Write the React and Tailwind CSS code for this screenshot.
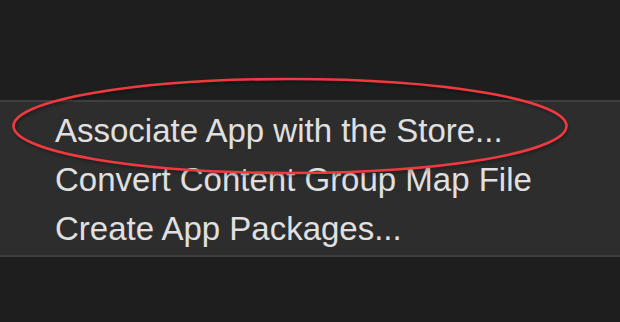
export default function App() {
  const items = [
    "Associate App with the Store...",
    "Convert Content Group Map File",
    "Create App Packages...",
  ];
  return (
    <div
      className="relative w-[620px] h-[322px] overflow-hidden bg-[#1e1e1e]"
      style={{ fontFamily: '"Liberation Sans", Arial, sans-serif' }}
    >
      <div className="mt-[100px] border-t-2 border-b-2 border-[#3f3f3f] bg-[#2d2d2d] pt-[4px] pb-[2px]">
        {items.map((t) => (
          <div
            key={t}
            className="pl-[55px] text-[33px] leading-[49px] text-[#e0e0e0] whitespace-nowrap"
          >
            {t}
          </div>
        ))}
      </div>
      <svg
        className="absolute left-0 top-0 pointer-events-none"
        width="620"
        height="322"
        viewBox="0 0 620 322"
      >
        <defs>
          <filter id="sh" x="-10%" y="-30%" width="120%" height="160%">
            <feGaussianBlur stdDeviation="1.5" />
          </filter>
        </defs>
        <ellipse
          cx="291"
          cy="128"
          rx="276"
          ry="47"
          fill="none"
          stroke="rgba(0,0,0,0.3)"
          strokeWidth="3"
          filter="url(#sh)"
        />
        <ellipse
          cx="290"
          cy="126"
          rx="276.5"
          ry="47"
          fill="none"
          stroke="#f03a40"
          strokeWidth="2.6"
        />
      </svg>
    </div>
  );
}
